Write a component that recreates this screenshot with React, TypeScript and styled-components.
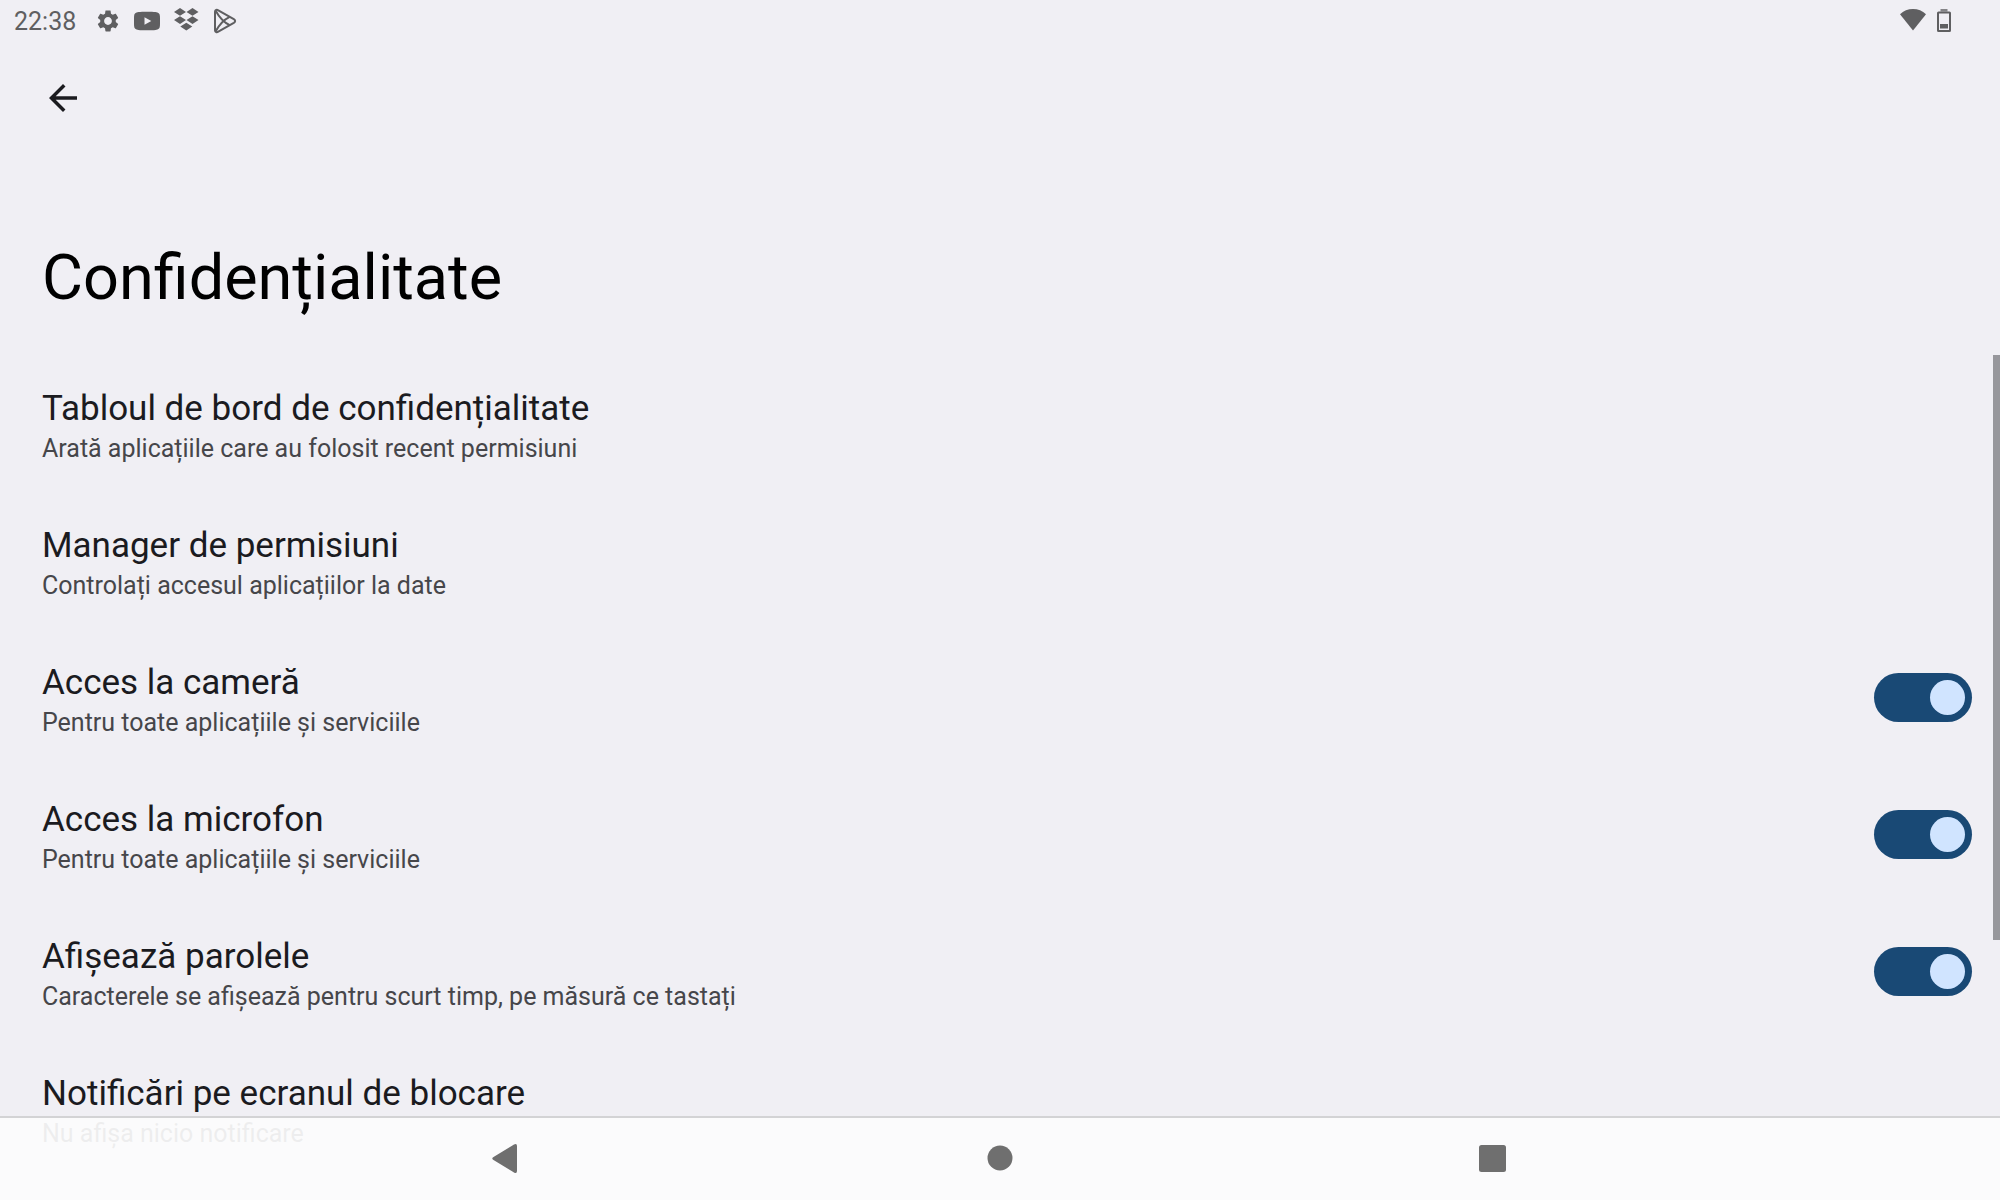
import React, { useState } from "react";
import styled, { createGlobalStyle } from "styled-components";

const GlobalStyle = createGlobalStyle`
  *, *::before, *::after { box-sizing: border-box; }
  body {
    margin: 0;
    background: #f0eff4;
    font-family: Roboto, "Noto Sans", sans-serif;
    color: #1b1b1f;
  }
`;

const Screen = styled.div`
  display: flex;
  flex-direction: column;
  height: 100vh;
  overflow: hidden;
`;

const StatusBar = styled.header`
  display: flex;
  flex: none;
  justify-content: space-between;
  align-items: center;
  height: 42px;
  padding: 0 48px 0 14px;
  color: #5f5f61;
`;

const StatusGroup = styled.div<{ $gap: number }>`
  display: flex;
  align-items: center;
  gap: ${(p) => p.$gap}px;
`;

const Clock = styled.time`
  margin-right: 6px;
  padding-top: 2px;
  font-size: 25px;
  line-height: 40px;
`;

const StatusIcon = styled.svg`
  display: block;
  width: 26px;
  height: 26px;
  fill: currentColor;
`;

const BatteryIcon = styled(StatusIcon)`
  width: 16px;
`;

const Toolbar = styled.div`
  display: flex;
  flex: none;
  align-items: center;
  height: 112px;
  padding: 0 42px;
`;

const BackButton = styled.button`
  display: flex;
  padding: 0;
  border: 0;
  background: none;
  color: inherit;

  svg {
    width: 42px;
    height: 42px;
    fill: currentColor;
  }
`;

const PageTitle = styled.h1`
  flex: none;
  margin: 0;
  padding: 87px 42px 40px;
  font-size: 63px;
  font-weight: 400;
  line-height: 74px;
  color: #000;
`;

const ListArea = styled.main`
  position: relative;
  flex: 1;
  min-height: 0;
  overflow: hidden;
`;

const List = styled.ul`
  margin: 0;
  padding: 0;
  list-style: none;
`;

const Row = styled.li`
  display: flex;
  align-items: center;
  justify-content: space-between;
  padding: 0 28px 0 42px;
`;

const RowLink = styled.a`
  flex: 1;
  padding: 33px 0 24px;
  color: inherit;
  text-decoration: none;
`;

const RowLabel = styled.label`
  flex: 1;
  padding: 33px 0 24px;
`;

const RowTitle = styled.span`
  display: block;
  font-size: 35px;
  line-height: 42px;
`;

const RowSummary = styled.span`
  display: block;
  font-size: 25px;
  line-height: 38px;
  color: #46464a;
`;

const Switch = styled.input`
  flex: none;
  appearance: none;
  display: flex;
  align-items: center;
  width: 98px;
  height: 49px;
  margin: 0;
  padding: 0 7px;
  border-radius: 25px;
  background: #77777a;

  &::before {
    content: "";
    width: 35px;
    height: 35px;
    border-radius: 50%;
    background: #e3e2e6;
  }

  &:checked {
    justify-content: flex-end;
    background: #194975;
  }

  &:checked::before {
    background: #d0e4ff;
  }
`;

const ScrollThumb = styled.div`
  position: absolute;
  top: 0;
  right: 0;
  width: 7px;
  height: 69.2%;
  background: #97979c;
`;

const NavBar = styled.nav`
  position: fixed;
  left: 0;
  right: 0;
  bottom: 0;
  display: flex;
  justify-content: center;
  gap: 408px;
  height: 84px;
  border-top: 2px solid #d3d3d5;
  background: rgba(252, 252, 252, 0.92);
`;

const NavButton = styled.button`
  display: flex;
  align-items: center;
  justify-content: center;
  width: 84px;
  padding: 0;
  border: 0;
  background: none;
  color: #6f6f6f;

  svg {
    width: 42px;
    height: 42px;
    fill: currentColor;
  }
`;

type Item = { id: string; title: string; summary: string; toggle?: boolean };

const items: Item[] = [
  { id: "dashboard", title: "Tabloul de bord de confidențialitate", summary: "Arată aplicațiile care au folosit recent permisiuni" },
  { id: "permissions", title: "Manager de permisiuni", summary: "Controlați accesul aplicațiilor la date" },
  { id: "camera", title: "Acces la cameră", summary: "Pentru toate aplicațiile și serviciile", toggle: true },
  { id: "microphone", title: "Acces la microfon", summary: "Pentru toate aplicațiile și serviciile", toggle: true },
  { id: "passwords", title: "Afișează parolele", summary: "Caracterele se afișează pentru scurt timp, pe măsură ce tastați", toggle: true },
  { id: "lockscreen", title: "Notificări pe ecranul de blocare", summary: "Nu afișa nicio notificare" },
];

function SettingRow({ item }: { item: Item }) {
  const [on, setOn] = useState(true);
  const text = (
    <>
      <RowTitle>{item.title}</RowTitle>
      <RowSummary>{item.summary}</RowSummary>
    </>
  );
  if (!item.toggle) {
    return (
      <Row>
        <RowLink href={`#${item.id}`}>{text}</RowLink>
      </Row>
    );
  }
  return (
    <Row>
      <RowLabel htmlFor={item.id}>{text}</RowLabel>
      <Switch id={item.id} type="checkbox" role="switch" checked={on} onChange={() => setOn(!on)} />
    </Row>
  );
}

export default function App() {
  return (
    <Screen>
      <GlobalStyle />
      <StatusBar>
        <StatusGroup $gap={13}>
          <Clock>22:38</Clock>
          <StatusIcon viewBox="0 0 24 24" aria-hidden="true">
            <path d="M19.14 12.94c.04-.3.06-.61.06-.94 0-.32-.02-.64-.07-.94l2.03-1.58c.18-.14.23-.41.12-.61l-1.92-3.32c-.12-.22-.37-.29-.59-.22l-2.39.96c-.5-.38-1.03-.7-1.62-.94l-.36-2.54c-.04-.24-.24-.41-.48-.41h-3.84c-.24 0-.43.17-.47.41l-.36 2.54c-.59.24-1.13.57-1.62.94l-2.39-.96c-.22-.08-.47 0-.59.22L2.74 8.87c-.12.21-.08.47.12.61l2.03 1.58c-.05.3-.09.63-.09.94s.02.64.07.94l-2.03 1.58c-.18.14-.23.41-.12.61l1.92 3.32c.12.22.37.29.59.22l2.39-.96c.5.38 1.03.7 1.62.94l.36 2.54c.05.24.24.41.48.41h3.84c.24 0 .44-.17.47-.41l.36-2.54c.59-.24 1.13-.56 1.62-.94l2.39.96c.22.08.47 0 .59-.22l1.92-3.32c.12-.22.07-.47-.12-.61l-2.01-1.58zM12 15.6c-1.98 0-3.6-1.62-3.6-3.6s1.62-3.6 3.6-3.6 3.6 1.62 3.6 3.6-1.62 3.6-3.6 3.6z" />
          </StatusIcon>
          <StatusIcon viewBox="0 0 26 26" aria-hidden="true">
            <path fillRule="evenodd" d="M4.5 4C8 3.6 18 3.6 21.500 4C24.500 4.300 25.700 5.500 25.900 8C26.100 11 26.100 15 25.900 18C25.700 20.500 24.500 21.700 21.500 22C18 22.400 8 22.400 4.500 22C1.500 21.700 .3 20.500 .1 18C-.1 15 -.1 11 .1 8C.3 5.500 1.500 4.300 4.500 4ZM10.500 9.200V16.800L17.300 13Z" />
          </StatusIcon>
          <StatusIcon viewBox="0 0 26 26" aria-hidden="true">
            <path d="M7 0l6 3.900-6 3.900-6-3.900zM19.500 0l6 3.900-6 3.900-6-3.900zM7 8.200l6 3.900-6 3.900-6-3.900zM19.500 8.200l6 3.900-6 3.900-6-3.900zM13.300 14.700l6 3.900-6 3.900-6-3.900z" />
          </StatusIcon>
          <StatusIcon viewBox="0 0 26 26" aria-hidden="true">
            <g fill="none" stroke="currentColor" strokeWidth="2" strokeLinejoin="round">
              <path d="M3 3.800C3 1.900 4.800 1.400 6.300 2.300L21.800 11.200C23.600 12.300 23.600 13.700 21.800 14.800L6.300 23.700C4.800 24.600 3 24.100 3 22.200Z" />
              <path d="M3.700 2.800C6.500 8 11.500 14.200 17.700 17.200M3.700 23.200C6.500 18 11.500 11.800 17.700 8.800" />
            </g>
          </StatusIcon>
        </StatusGroup>
        <StatusGroup $gap={10}>
          <StatusIcon viewBox="0 0 26 26" aria-hidden="true">
            <path d="M13 22.500L0 6.200C3.500 2.700 8 1 13 1S22.500 2.700 26 6.200Z" />
          </StatusIcon>
          <BatteryIcon viewBox="0 0 16 26" aria-hidden="true">
            <path opacity=".75" d="M4.500 1h7V3.500h-7z" />
            <path fillRule="evenodd" d="M2.500 3.500h11A1.500 1.500 0 0 1 15 5v17.500A1.500 1.500 0 0 1 13.500 24h-11A1.500 1.500 0 0 1 1 22.500V5A1.500 1.500 0 0 1 2.500 3.500zM3 5.500V22h10V5.500z" />
            <path d="M4 16h8v4.500H4z" />
          </BatteryIcon>
        </StatusGroup>
      </StatusBar>
      <Toolbar>
        <BackButton type="button" aria-label="Înapoi">
          <svg viewBox="0 0 24 24" aria-hidden="true">
            <path d="M20 11H7.830l5.590-5.590L12 4l-8 8 8 8 1.410-1.410L7.830 13H20v-2z" />
          </svg>
        </BackButton>
      </Toolbar>
      <PageTitle>Confidențialitate</PageTitle>
      <ListArea>
        <List>
          {items.map((item) => (
            <SettingRow key={item.id} item={item} />
          ))}
        </List>
        <ScrollThumb />
      </ListArea>
      <NavBar>
        <NavButton type="button" aria-label="Înapoi">
          <svg viewBox="0 0 42 42" aria-hidden="true">
            <path d="M27 6.500Q30 5 30 8V33Q30 36 27 34.500L6.500 22Q4 20.500 6.500 19Z" />
          </svg>
        </NavButton>
        <NavButton type="button" aria-label="Ecran de pornire">
          <svg viewBox="0 0 42 42" aria-hidden="true">
            <circle cx="21" cy="20" r="12.500" />
          </svg>
        </NavButton>
        <NavButton type="button" aria-label="Aplicații recente">
          <svg viewBox="0 0 42 42" aria-hidden="true">
            <rect x="8" y="7" width="27" height="27" rx="2.500" />
          </svg>
        </NavButton>
      </NavBar>
    </Screen>
  );
}
